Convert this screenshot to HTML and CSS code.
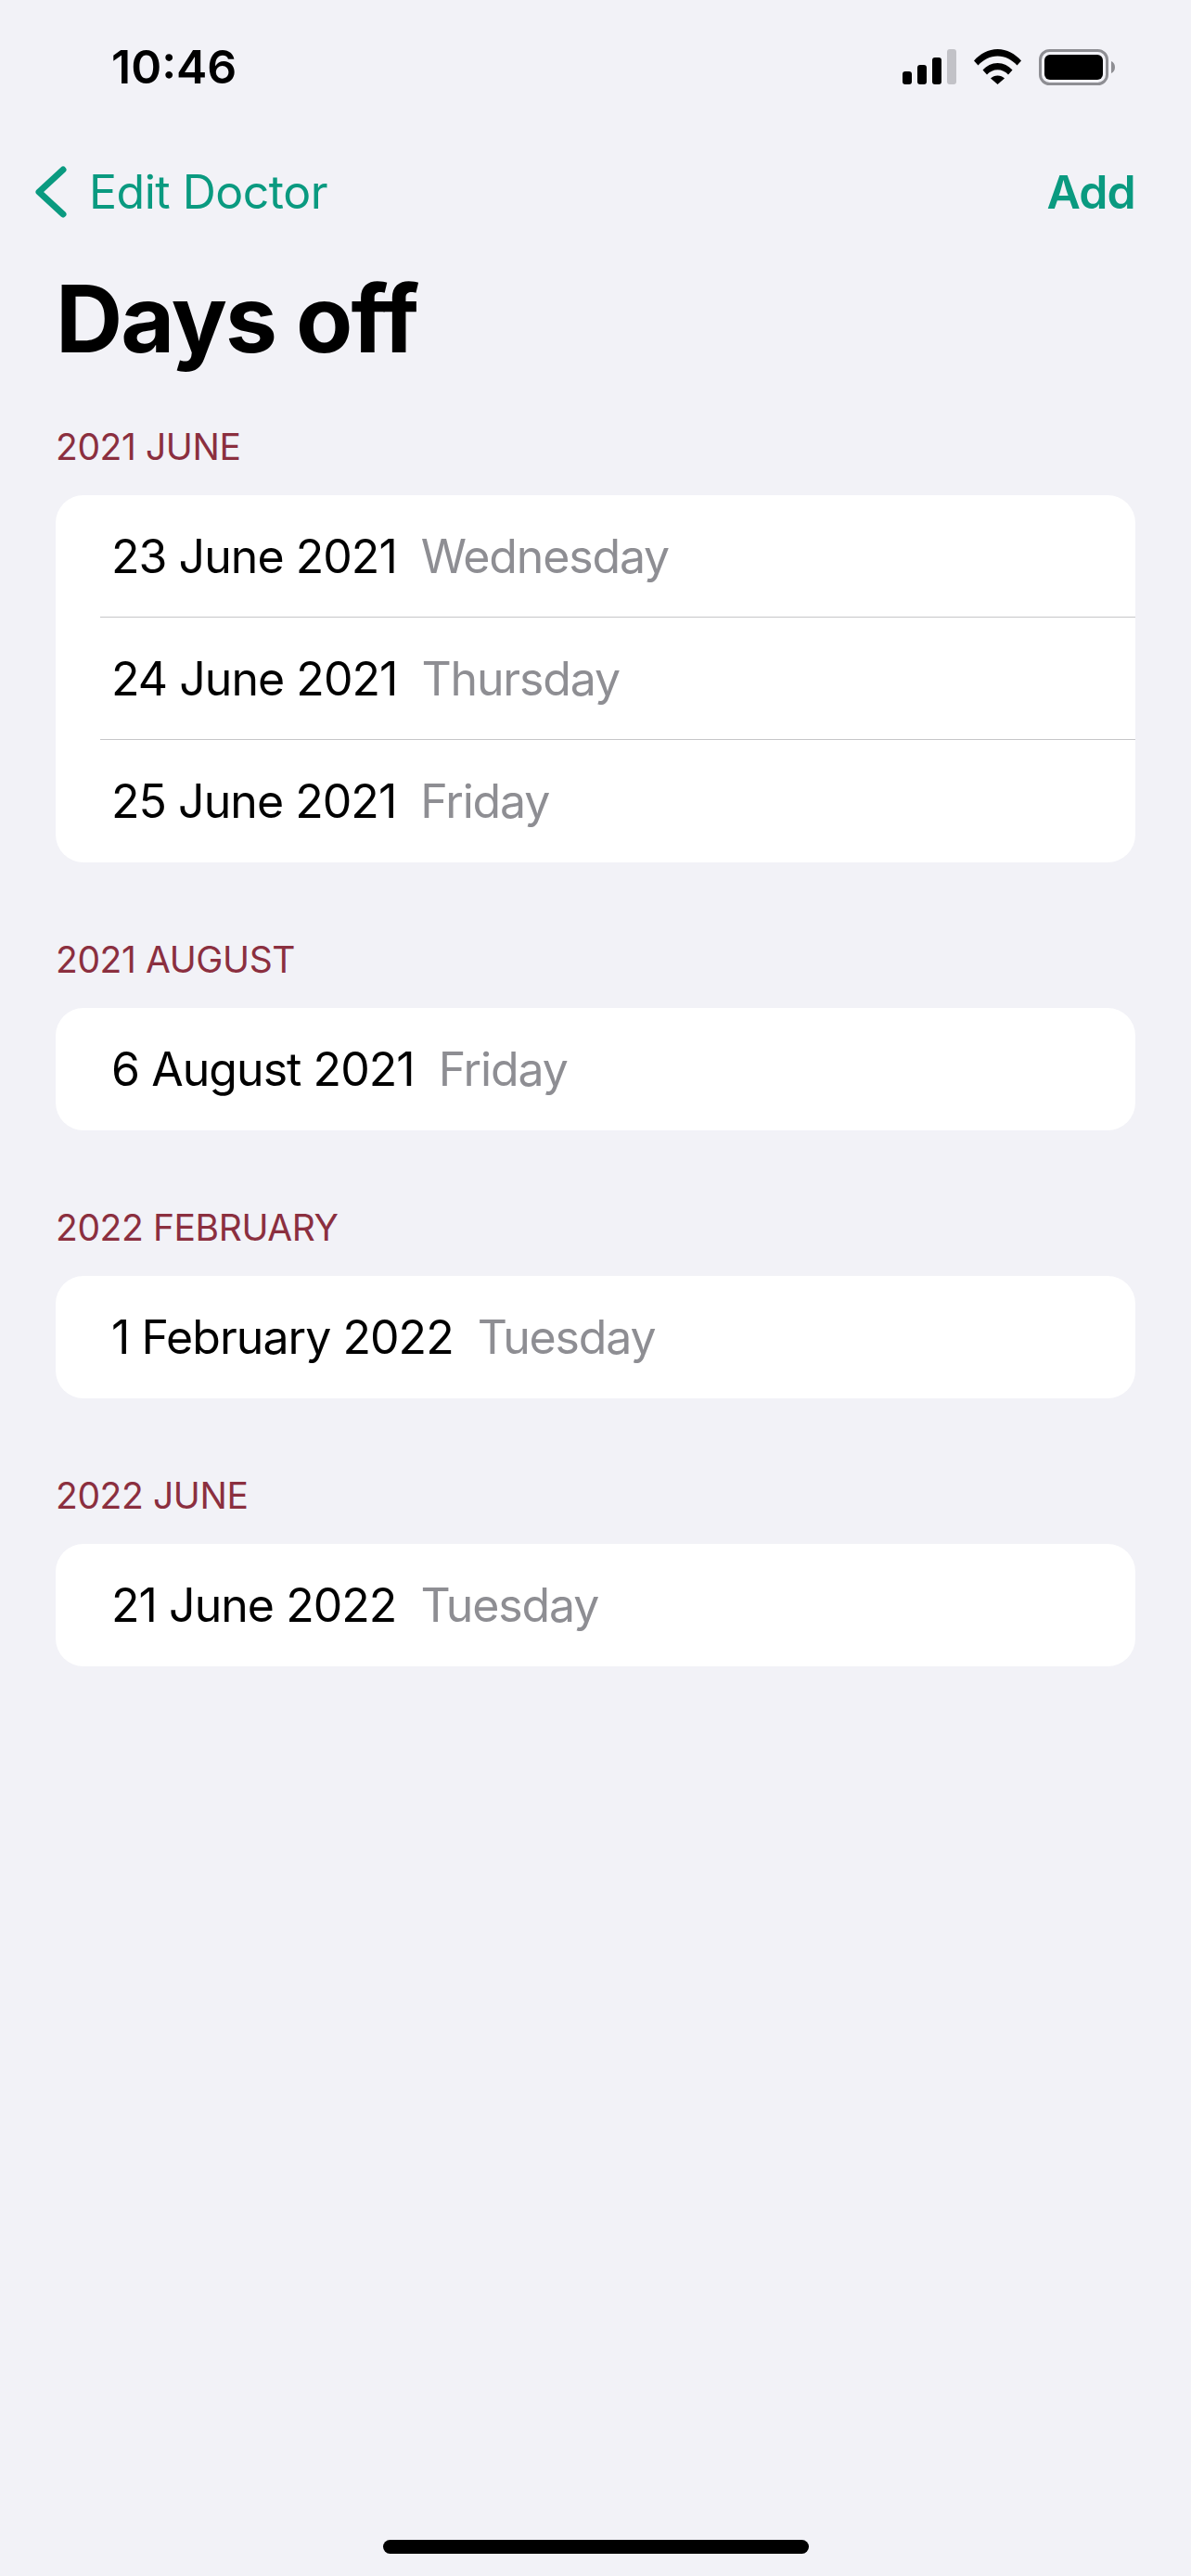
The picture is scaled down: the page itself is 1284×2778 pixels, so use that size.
FILE: index.html
```html
<!DOCTYPE html>
<html lang="en">
<head>
    <meta charset="UTF-8">
    <meta name="viewport" content="width=device-width, initial-scale=1.0">
    <title>Days off</title>
    <link rel="stylesheet" href="styles.css">
</head>
<body>
    <div class="status-bar">
        <span class="time">10:46</span>
        <div class="status-icons">
            <svg class="signal" width="58" height="38" viewBox="0 0 58 38">
                <rect x="0" y="24" width="10" height="14" rx="3" fill="#000"/>
                <rect x="16" y="17" width="10" height="21" rx="3" fill="#000"/>
                <rect x="32" y="9" width="10" height="29" rx="3" fill="#000"/>
                <rect x="48" y="0" width="10" height="38" rx="3" fill="#c2c2c7"/>
            </svg>
            <svg class="wifi" width="51" height="38" viewBox="0 0 51 38">
                <path d="M0 12.5C6.5 5 15.500 0 25.500 0S44.500 5 51 12.500L46.500 17.500C41 11.500 33.800 7.500 25.500 7.500S10 11.500 4.500 17.500Z" fill="#000"/>
                <path d="M9.500 22.500C13.500 18 19.300 15 25.500 15S37.500 18 41.500 22.500L37 27.500C34 24.300 30 22.300 25.500 22.300S17 24.300 14 27.500Z" fill="#000"/>
                <path d="M18 31.500C20 29.500 22.600 28.500 25.500 28.500S31 29.500 33 31.500L25.500 38Z" fill="#000"/>
            </svg>
            <svg class="battery" width="82" height="39" viewBox="0 0 82 39">
                <rect x="1.500" y="1.500" width="72" height="36" rx="10" fill="none" stroke="#8e8e93" stroke-width="3"/>
                <rect x="6" y="6" width="63" height="27" rx="6" fill="#000"/>
                <path d="M78 13C80.500 14 82 16.500 82 19.500S80.500 25 78 26Z" fill="#8e8e93"/>
            </svg>
        </div>
    </div>

    <div class="nav-bar">
        <a class="back">
            <svg class="chevron" width="34" height="56" viewBox="0 0 34 56">
                <path d="M30 4L4 28L30 52" fill="none" stroke="#0a9a80" stroke-width="7" stroke-linecap="round" stroke-linejoin="round"/>
            </svg>
            <span>Edit Doctor</span>
        </a>
        <a class="add">Add</a>
    </div>

    <h1>Days off</h1>

    <section class="group">
        <h2>2021 June</h2>
        <div class="card">
            <div class="row"><span class="date">23 June 2021</span><span class="weekday">Wednesday</span></div>
            <div class="row"><span class="date">24 June 2021</span><span class="weekday">Thursday</span></div>
            <div class="row"><span class="date">25 June 2021</span><span class="weekday">Friday</span></div>
        </div>
    </section>

    <section class="group">
        <h2>2021 August</h2>
        <div class="card">
            <div class="row"><span class="date">6 August 2021</span><span class="weekday">Friday</span></div>
        </div>
    </section>

    <section class="group">
        <h2>2022 February</h2>
        <div class="card">
            <div class="row"><span class="date">1 February 2022</span><span class="weekday">Tuesday</span></div>
        </div>
    </section>

    <section class="group">
        <h2>2022 June</h2>
        <div class="card">
            <div class="row"><span class="date">21 June 2022</span><span class="weekday">Tuesday</span></div>
        </div>
    </section>

    <div class="home-indicator"></div>
</body>
</html>
```

FILE: styles.css
```css
html, body {
    height: 100%;
}
body {
    font-family: Inter, "Liberation Sans", sans-serif;
    margin: 0;
    background-color: #f2f2f7;
    color: #000;
    position: relative;
    overflow: hidden;
}
.status-bar {
    display: flex;
    justify-content: space-between;
    align-items: flex-start;
    height: 146px;
    padding: 53px 82px 0 120px;
    box-sizing: border-box;
}
.time {
    font-size: 50px;
    font-weight: 600;
    line-height: 38px;
}
.status-icons {
    display: flex;
    align-items: flex-start;
    gap: 19px;
}
.nav-bar {
    display: flex;
    justify-content: space-between;
    align-items: center;
    height: 122px;
    padding: 0 60px 0 38px;
    color: #0a9a80;
    font-size: 50px;
    line-height: 60px;
}
.back {
    display: flex;
    align-items: center;
    gap: 24px;
    letter-spacing: -0.5px;
}
.add {
    font-weight: 600;
    letter-spacing: -0.8px;
}
h1 {
    margin: 26px 0 40px 60px;
    font-size: 100px;
    font-weight: 700;
    line-height: 100px;
    letter-spacing: -1.9px;
}
.group {
    margin: 0 60px 57px;
}
h2 {
    margin: 0;
    padding: 24px 0 28px;
    font-size: 39px;
    font-weight: 400;
    line-height: 48px;
    letter-spacing: -0.4px;
    color: #8b2f3f;
    text-transform: uppercase;
}
.card {
    background-color: white;
    border-radius: 30px;
    overflow: hidden;
}
.row {
    display: flex;
    align-items: center;
    gap: 26px;
    height: 132px;
    margin-left: 48px;
    padding-left: 12px;
    font-size: 50px;
    letter-spacing: -0.95px;
    box-sizing: border-box;
}
.row:not(:last-child) {
    border-bottom: 1px solid #c6c6c8;
    padding-top: 1px;
}
.weekday {
    color: #8e8e93;
    letter-spacing: -1.15px;
}
.home-indicator {
    position: absolute;
    left: 413px;
    bottom: 24px;
    width: 459px;
    height: 15px;
    border-radius: 8px;
    background-color: #000;
}
```
